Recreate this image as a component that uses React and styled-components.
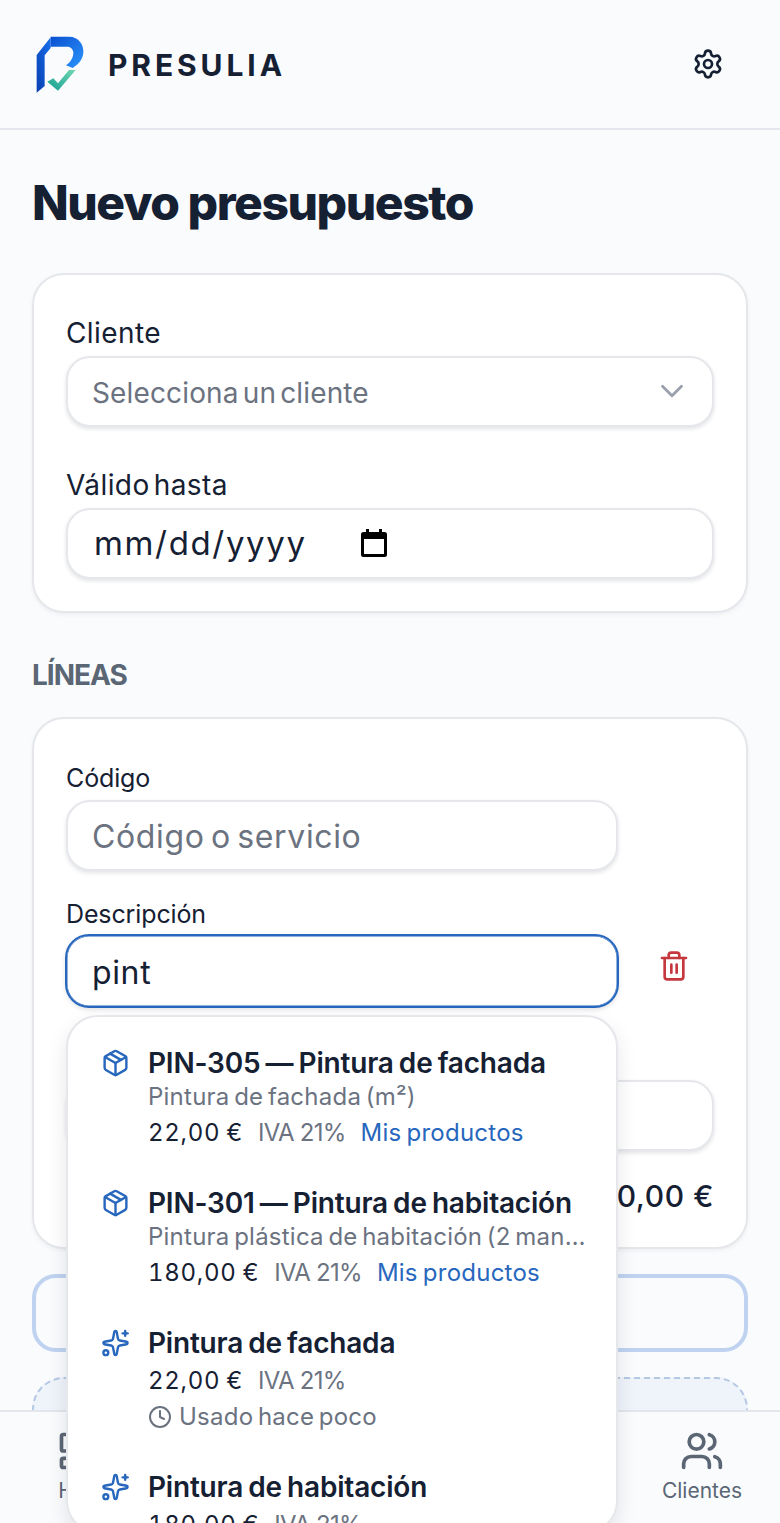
import React from "react";
import styled, { createGlobalStyle } from "styled-components";
import { Settings, ChevronDown, Trash2, Package, Sparkles, Clock, Users, LayoutDashboard } from "lucide-react";

const Global = createGlobalStyle`
  html, body { margin: 0; padding: 0; background: #f8fafc; }
  * { box-sizing: border-box; }
  body { font-family: Inter, "Noto Sans", sans-serif; color: #162033; }
`;

const Page = styled.div`
  position: relative;
  width: 780px;
  height: 1523px;
  overflow: hidden;
  background: #f9fbfd;
`;
const Header = styled.header`
  height: 130px;
  border-bottom: 2px solid #e3e6ec;
  display: flex;
  align-items: center;
  justify-content: space-between;
  padding: 2px 56px 0 36px;
`;
const Brand = styled.div`
  display: flex;
  align-items: center;
  gap: 24px;
`;
const Wordmark = styled.span`
  font-size: 30px;
  font-weight: 700;
  letter-spacing: 0.13em;
  color: #162033;
`;
const Gear = styled(Settings)`
  margin-top: -2px;
`;
const Main = styled.main`
  padding: 0 32px;
`;
const Title = styled.h1`
  margin: 43px 0 40px;
  font-size: 48px;
  line-height: 60px;
  font-weight: 800;
  letter-spacing: -0.03em;
  color: #162033;
`;
const Card = styled.section`
  background: #fff;
  border: 2px solid #e5e7eb;
  border-radius: 32px;
  padding: ${(p) => p.$pad};
  box-shadow: 0 2px 4px rgba(15, 23, 42, 0.05);
`;
const Field = styled.div`
  position: relative;
  margin-top: ${(p) => p.$top || 0}px;
  width: ${(p) => p.$width || "auto"};
`;
const Label = styled.label`
  display: block;
  font-size: ${(p) => (p.$small ? 25 : 28)}px;
  line-height: ${(p) => (p.$small ? 36 : 40)}px;
  margin-bottom: ${(p) => (p.$small ? 4 : 3)}px;
  font-weight: 400;
  letter-spacing: ${(p) => (p.$small ? -0.005 : 0.015)}em;
  word-spacing: -0.15em;
  color: #162033;
`;
const boxCss = `
  width: 100%;
  height: 71px;
  background: #fff;
  border: 2px solid #e5e7eb;
  border-radius: 24px;
  box-shadow: 0 2px 4px rgba(15, 23, 42, 0.12);
  padding: 2px 24px 0;
`;
const SelectBox = styled.div`
  ${boxCss}
  display: flex;
  align-items: center;
  justify-content: space-between;
  font-size: 28px;
  color: #6b7280;
  letter-spacing: 0.005em;
  word-spacing: -0.14em;
  padding-right: 21px;
  svg { margin-top: -3px; }
`;
const DateBox = styled.div`
  ${boxCss}
  display: flex;
  align-items: center;
  gap: 54px;
  font-size: 33px;
  letter-spacing: 0.05em;
  color: #162033;
  padding-top: 0;
  padding-bottom: 2px;
  padding-left: 26px;
`;
const Input = styled.input`
  ${boxCss}
  display: block;
  font: inherit;
  font-size: 32px;
  letter-spacing: 0.02em;
  word-spacing: -0.1em;
  color: #162033;
  outline: none;
  &::placeholder { color: #6b7280; opacity: 1; }
  ${(p) => p.$focus && `
    width: calc(100% + 2px);
    height: 74px;
    margin: -2px -1px -1px;
    border-color: #2767bd;
    box-shadow: inset 0 0 0 0.5px #2767bd, 0 2px 4px rgba(15, 23, 42, 0.12);
    padding-left: 25px;
  `}
`;
const SectionLabel = styled.h2`
  margin: 42px 0 22px;
  font-size: 28px;
  line-height: 40px;
  font-weight: 700;
  letter-spacing: -0.035em;
  color: #5b6675;
`;
const DescRow = styled.div`
  display: flex;
  align-items: flex-start;
  margin-top: 25px;
`;
const TrashButton = styled.button`
  border: 0;
  background: none;
  padding: 0;
  width: 32px;
  height: 36px;
  margin: 53px 0 0 40px;
  color: #c5383f;
`;
const Total = styled.div`
  margin-top: 25px;
  text-align: right;
  font-size: 30px;
  line-height: 40px;
  font-weight: 500;
  letter-spacing: 0.02em;
  color: #162033;
`;
const AddButton = styled.button`
  display: block;
  width: 100%;
  height: 78px;
  margin-top: 25px;
  border: 4px solid #bfd3f0;
  border-radius: 24px;
  background: #f9fbfd;
  font: inherit;
  font-size: 28px;
  font-weight: 600;
  color: #2767bd;
`;
const DropZone = styled.div`
  height: 200px;
  margin-top: 25px;
  border: 2px dashed #b4c8e4;
  border-radius: 32px;
  background: #eff4fb;
`;
const Dropdown = styled.div`
  position: absolute;
  z-index: 5;
  left: 0;
  top: 119px;
  width: 552px;
  height: 518px;
  overflow: hidden;
  background: #fff;
  border: 2px solid #e5e7eb;
  border-radius: 32px;
  padding: 12px 0;
  box-shadow: 0 8px 20px rgba(15, 23, 42, 0.1);
`;
const Item = styled.div`
  display: flex;
  gap: 18px;
  padding: 16px 30px 18px 33px;
`;
const ItemIcon = styled.div`
  flex: none;
  width: 29px;
  height: 36px;
  display: flex;
  align-items: center;
  justify-content: center;
  color: #2767bd;
`;
const ItemBody = styled.div`
  min-width: 0;
  flex: 1;
`;
const ItemTitle = styled.div`
  font-size: 28px;
  line-height: 36px;
  font-weight: 600;
  letter-spacing: -0.007em;
  word-spacing: -0.06em;
  white-space: nowrap;
  color: #162033;
`;
const ItemSub = styled.div`
  font-size: 24px;
  line-height: 32px;
  margin-bottom: 2px;
  color: #6b7280;
  letter-spacing: 0.01em;
  word-spacing: -0.1em;
  white-space: nowrap;
  overflow: hidden;
  text-overflow: ellipsis;
`;
const Meta = styled.div`
  display: flex;
  gap: 15px;
  font-size: 24px;
  line-height: 36px;
  margin-top: ${(p) => p.$top || 0}px;
`;
const Price = styled.span`
  color: #162033;
  font-weight: 400;
  letter-spacing: 0.03em;
  word-spacing: -0.05em;
  font-variant-numeric: tabular-nums;
`;
const Tax = styled.span`
  color: #6b7280;
  letter-spacing: -0.03em;
`;
const Source = styled.span`
  color: #2767bd;
  letter-spacing: 0.01em;
  word-spacing: -0.08em;
`;
const Used = styled.div`
  display: flex;
  align-items: center;
  gap: 7px;
  font-size: 24px;
  line-height: 36px;
  color: #6b7280;
  letter-spacing: 0.01em;
  word-spacing: -0.1em;
`;
const BottomNav = styled.nav`
  position: absolute;
  left: 0;
  right: 0;
  bottom: 0;
  height: 113px;
  display: grid;
  grid-template-columns: repeat(5, 1fr);
  background: #f9fbfd;
  border-top: 2px solid #e3e6ec;
`;
const NavItem = styled.div`
  display: flex;
  flex-direction: column;
  align-items: center;
  gap: 3px;
  padding-top: 17px;
  font-size: 21px;
  line-height: 30px;
  color: #5b6675;
`;

const Logo = () => (
  <svg width="48" height="58" viewBox="36 28 144 174" aria-hidden="true">
    <defs>
      <linearGradient id="lg1" x1="0" y1="1" x2="1" y2="0">
        <stop offset="0" stopColor="#0a3fb0" />
        <stop offset="1" stopColor="#1670ee" />
      </linearGradient>
      <linearGradient id="lg2" x1="0" y1="0" x2="1" y2="1">
        <stop offset="0" stopColor="#0a4fd0" />
        <stop offset="1" stopColor="#2b96fb" />
      </linearGradient>
      <linearGradient id="lg3" x1="0" y1="1" x2="1" y2="0">
        <stop offset="0" stopColor="#169d92" />
        <stop offset="1" stopColor="#6fd8b0" />
      </linearGradient>
    </defs>
    <path d="M38 85 L80 32 L80 64 L62 86 L62 178 L38 198 Z" fill="url(#lg1)" />
    <path d="M80 30 H135 C165 30 180 55 178 78 C176 98 166 110 146 124 L126 116 C140 106 148 92 148 78 C148 68 140 60 130 60 H80 Z" fill="url(#lg2)" />
    <path d="M70 165 L88 155 L102 170 L135 130 L155 130 L102 192 Z" fill="url(#lg3)" />
  </svg>
);

const CalendarGlyph = () => (
  <svg width="26" height="28" viewBox="0 0 26 28" aria-hidden="true">
    <path d="M5 0h3v3h10V0h3v3h2.500A2.500 2.500 0 0 1 26 5.500v20a2.500 2.500 0 0 1-2.500 2.500h-21A2.500 2.500 0 0 1 0 25.500v-20A2.500 2.500 0 0 1 2.500 3H5zM3 10v15h20V10z" fill="#000" />
  </svg>
);

const results = [
  { id: 1, icon: "box", title: "PIN-305 — Pintura de fachada", sub: "Pintura de fachada (m²)", price: "22,00 €", source: "Mis productos" },
  { id: 2, icon: "box", title: "PIN-301 — Pintura de habitación", sub: "Pintura plástica de habitación (2 manos)", price: "180,00 €", source: "Mis productos" },
  { id: 3, icon: "ai", title: "Pintura de fachada", price: "22,00 €", used: true },
  { id: 4, icon: "ai", title: "Pintura de habitación", price: "180,00 €" },
];

export default function App() {
  return (
    <Page>
      <Global />
      <Header>
        <Brand>
          <Logo />
          <Wordmark>PRESULIA</Wordmark>
        </Brand>
        <Gear size={32} color="#162033" strokeWidth={2} />
      </Header>
      <Main>
        <Title>Nuevo presupuesto</Title>
        <Card $pad="38px 32px 32px">
          <Field>
            <Label>Cliente</Label>
            <SelectBox>
              Selecciona un cliente
              <ChevronDown size={38} color="#9aa1ad" strokeWidth={1.8} />
            </SelectBox>
          </Field>
          <Field $top={38}>
            <Label>Válido hasta</Label>
            <DateBox>
              mm/dd/yyyy
              <CalendarGlyph />
            </DateBox>
          </Field>
        </Card>
        <SectionLabel>LÍNEAS</SectionLabel>
        <Card $pad="41px 32px 31px">
          <Field $width="552px">
            <Label $small>Código</Label>
            <Input placeholder="Código o servicio" readOnly />
          </Field>
          <DescRow>
            <Field $width="552px">
              <Label $small>Descripción</Label>
              <Input $focus value="pint" readOnly />
              <Dropdown>
                {results.map((r) => (
                  <Item key={r.id}>
                    <ItemIcon>
                      {r.icon === "box" ? <Package size={36} strokeWidth={2} /> : <Sparkles size={36} strokeWidth={2} />}
                    </ItemIcon>
                    <ItemBody>
                      <ItemTitle>{r.title}</ItemTitle>
                      {r.sub && <ItemSub>{r.sub}</ItemSub>}
                      <Meta $top={r.sub ? 0 : 2}>
                        <Price>{r.price}</Price>
                        <Tax>IVA 21%</Tax>
                        {r.source && <Source>{r.source}</Source>}
                      </Meta>
                      {r.used && (
                        <Used>
                          <Clock size={24} strokeWidth={2} />
                          Usado hace poco
                        </Used>
                      )}
                    </ItemBody>
                  </Item>
                ))}
              </Dropdown>
            </Field>
            <TrashButton aria-label="Eliminar">
              <Trash2 size={32} strokeWidth={2} />
            </TrashButton>
          </DescRow>
          <Field $top={33}>
            <Label $small>Cantidad</Label>
            <Input readOnly />
          </Field>
          <Total>0,00 €</Total>
        </Card>
        <AddButton>Añadir línea</AddButton>
        <DropZone />
      </Main>
      <BottomNav>
        <NavItem><LayoutDashboard size={44} strokeWidth={2} />Hoy</NavItem>
        <NavItem />
        <NavItem />
        <NavItem />
        <NavItem><Users size={44} strokeWidth={2} />Clientes</NavItem>
      </BottomNav>
    </Page>
  );
}
